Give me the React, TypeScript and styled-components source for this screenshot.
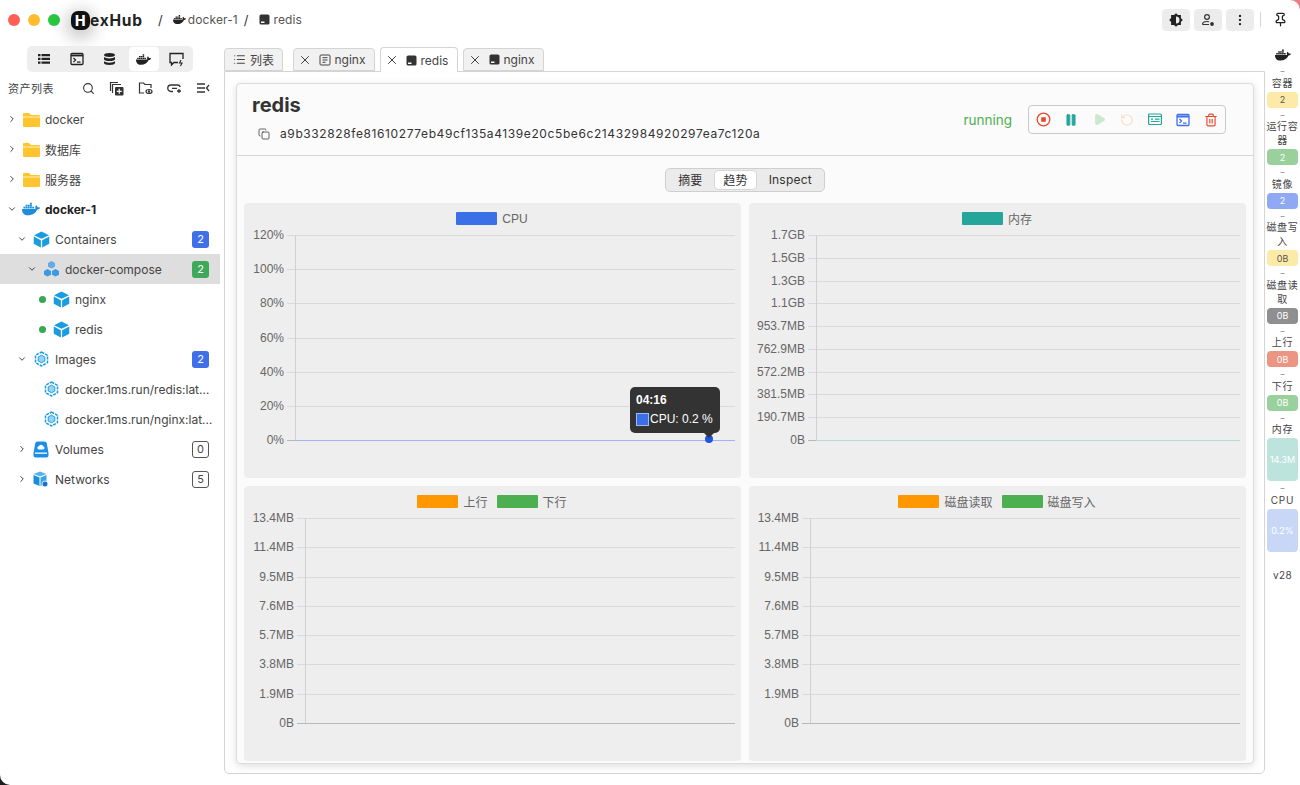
import React from "react";
import styled, { createGlobalStyle } from "styled-components";
import { FaDocker } from "react-icons/fa";
import {
  Search, ChevronRight, ChevronDown, X, Copy, Pause, Play, RotateCcw,
  Trash2, MoreVertical, Pin, List,
} from "lucide-react";

const UI = `Inter, "Noto Sans CJK SC", sans-serif`;

const Global = createGlobalStyle`
  html, body { margin: 0; padding: 0; height: 100%; overflow: hidden; }
  body {
    font-family: ${UI}; font-size: 12px; color: #333;
    background: linear-gradient(to top right, #1c1c1c 50%, #ec7f86 50%);
  }
  * { box-sizing: border-box; }
`;

const Shell = styled.div`
  width: 1300px; height: 785px; display: flex; flex-direction: column; background: #fff; overflow: hidden;
  border-radius: 0 10px 0 10px;
`;
const TopBar = styled.header`
  height: 40px; flex: none; display: flex; align-items: center; padding: 0 0 0 8px;
`;
const Lights = styled.div`display: flex; gap: 8px; margin-right: 11px;`;
const Light = styled.span<{ $c: string }>`
  width: 12px; height: 12px; border-radius: 50%; background: ${(p) => p.$c};
`;
const Logo = styled.div`
  width: 76px; display: flex; align-items: center; font: 700 15.5px ${UI}; color: #222;
  letter-spacing: 0.75px;
`;
const LogoMark = styled.span`
  width: 19px; height: 19px; border-radius: 7px; background: #111; color: #fff; margin-right: 0;
  display: flex; align-items: center; justify-content: center; font-size: 14px; font-weight: 800; flex: none;
  box-shadow: 0 4px 16px 5px rgba(0,0,0,.2);
`;
const Crumbs = styled.nav`
  display: flex; align-items: center; flex: 1; margin-left: 11px; color: #555; font-size: 12px; margin-top: -1px; letter-spacing: .1px;
`;
const Slash = styled.span<{ $gap: number }>`color: #333; font-size: 13px; margin: 0 ${(p) => p.$gap}px 0 0;`;
const CrumbLabel = styled.span<{ $gap?: number; $left?: number }>`margin: 0 ${(p) => p.$gap ?? 0}px 0 ${(p) => p.$left ?? 3}px;`;
const TopActions = styled.div`display: flex; align-items: center; gap: 4px; margin-top: -1px;`;
const TopBtn = styled.button`
  width: 28px; height: 22px; border: 0; border-radius: 4px; background: #ececec; padding: 0;
  display: flex; align-items: center; justify-content: center; color: #222;
`;
const VRule = styled.span`width: 1px; height: 15px; background: #d4d4d4; margin: 0 8px 0 2px;`;
const PinBox = styled.span`display: flex; width: 15px; margin-right: 12px; color: #222;`;

const Body = styled.div`flex: 1; min-height: 0; display: flex;`;
const Sidebar = styled.aside`width: 220px; flex: none; padding-top: 6px; display: flex; flex-direction: column;`;
const ModeBar = styled.div`
  align-self: flex-start; margin-left: 27px; width: 166px; height: 26px; border-radius: 5px; background: #eee;
  display: flex;
`;
const ModeBtn = styled.span<{ $on?: boolean }>`
  width: 33.2px; height: 24px; margin-top: 1px; padding: 0 1.5px; display: flex; align-items: center; justify-content: center;
  border-radius: 5px; color: #222; background: ${(p) => (p.$on ? "#fff" : "transparent")}; background-clip: content-box;
`;
const ToolRow = styled.div`height: 32px; flex: none; display: flex; align-items: center; padding-left: 8px; color: #444;`;
const ToolTitle = styled.span`font-size: 11px; width: 74px; letter-spacing: .5px;`;
const ToolIcons = styled.div`display: flex; gap: 14px; align-items: center; color: #333;`;

const Row = styled.div<{ $depth: number; $sel?: boolean; $tight?: boolean }>`
  height: 30px; display: flex; align-items: center;
  padding: 0 ${(p) => (p.$tight ? 5 : 11)}px 0 ${(p) => 7 + p.$depth * 10}px;
  background: ${(p) => (p.$sel ? "#dedede" : "transparent")};
`;
const Chev = styled.span`width: 10px; flex: none; display: flex; align-items: center; justify-content: center; color: #222;`;
const DotSlot = styled.span`width: 10px; flex: none; display: flex; justify-content: flex-end;`;
const Dot = styled.i`width: 7px; height: 7px; border-radius: 50%; background: #34a853; display: block; margin-right: 1px;`;
const IconSlot = styled.span`width: 18px; height: 18px; margin: 0 5px; flex: none; display: flex; align-items: center; justify-content: center;`;
const Label = styled.span<{ $bold?: boolean }>`
  flex: 1; min-width: 0; white-space: nowrap; overflow: hidden; text-overflow: ellipsis; font-size: 12px;
  color: ${(p) => (p.$bold ? "#222" : "#444")}; font-weight: ${(p) => (p.$bold ? 700 : 400)};
`;
const Count = styled.span<{ $kind: "blue" | "green" | "line" }>`
  width: 17px; height: 17px; border-radius: 3px; font-size: 11px; display: flex; align-items: center; justify-content: center; flex: none;
  background: ${(p) => (p.$kind === "blue" ? "#3f70e8" : p.$kind === "green" ? "#3fa95b" : "#fff")};
  color: ${(p) => (p.$kind === "line" ? "#444" : "#fff")};
  border: ${(p) => (p.$kind === "line" ? "1px solid #555" : "0")};
`;

const Main = styled.main`flex: 1; min-width: 0; display: flex; flex-direction: column; padding: 8px 0 11px 4px;`;
const Tabs = styled.div`display: flex; align-items: flex-end; height: 23px; flex: none; gap: 5px; position: relative; z-index: 1;`;
const Tab = styled.div<{ $on?: boolean; $w: number; $after?: number; $pad?: number }>`
  width: ${(p) => p.$w}px; margin-right: ${(p) => p.$after ?? 0}px; padding-right: ${(p) => p.$pad ?? 0}px;
  height: ${(p) => (p.$on ? 25 : 23)}px; margin-bottom: ${(p) => (p.$on ? -1 : 0)}px;
  border: 1px solid #d4d4d4; border-bottom: ${(p) => (p.$on ? "0" : "1px solid #d4d4d4")};
  border-radius: 4px 4px 0 0; background: ${(p) => (p.$on ? "#fff" : "#f1f1f1")};
  display: flex; align-items: center; justify-content: center; gap: 4px; font-size: 12px; color: #444;
`;
const TabClose = styled.span`display: flex; margin-right: 3px; color: #333;`;
const Panel = styled.section`
  flex: 1; min-height: 0; border: 1px solid #d4d4d4; border-radius: 0 0 5px 5px; padding: 11px 10px 9px 11px; background: #fff;
  display: flex;
`;
const Card = styled.article`
  flex: 1; min-width: 0; border: 1px solid #dcdcdc; border-radius: 4px; background: #fbfbfb;
  box-shadow: 0 2px 8px rgba(0,0,0,.13); display: flex; flex-direction: column; overflow: hidden;
`;
const CardHead = styled.div`
  height: 72px; flex: none; border-bottom: 1px solid #d6d6d6; display: flex; align-items: center; padding: 0 27px 0 15px;
`;
const HeadText = styled.div`flex: 1; align-self: flex-start; margin-top: 9px; display: flex; flex-direction: column;`;
const Title = styled.h1`margin: 0; font: 700 20px/24px ${UI}; color: #333;`;
const IdRow = styled.div`display: flex; align-items: center; margin: 9px 0 0 6px; color: #333; gap: 10px;`;
const IdText = styled.span`font: 400 12px ${UI}; letter-spacing: .6px;`;
const Status = styled.span`font-size: 13.5px; color: #4caf50; margin-right: 16px;`;
const ActionGroup = styled.div`
  width: 198px; height: 29px; border: 1px solid #c9c9c9; border-radius: 4px; display: flex; align-items: center;
`;
const Action = styled.span<{ $c: string; $dim?: boolean }>`
  width: 28px; display: flex; align-items: center; justify-content: center; color: ${(p) => p.$c}; opacity: ${(p) => (p.$dim ? 0.25 : 1)};
`;
const SegRow = styled.div`flex: none; display: flex; justify-content: center; padding: 12px 0 11px;`;
const Seg = styled.div`
  width: 160px; height: 24px; border: 1px solid #cfcfcf; border-radius: 5px; background: #ebebeb; display: flex; align-items: center; padding: 0 1px;
`;
const SegItem = styled.span<{ $on?: boolean; $w: number }>`
  width: ${(p) => p.$w}px; height: 20px; border-radius: 4px; display: flex; align-items: center; justify-content: center; font-size: 12px; color: #333; padding-bottom: 1px;
  background: ${(p) => (p.$on ? "#fff" : "transparent")}; letter-spacing: .2px;
  border: ${(p) => (p.$on ? "1px solid #d6d6d6" : "0")};
`;
const ChartGrid = styled.div`
  flex: 1; min-height: 0; display: grid; grid-template-columns: 497px 497px; grid-template-rows: 275px 275px; gap: 8px; padding: 0 0 0 7px;
`;
const ChartCard = styled.div`background: #eeeeee; border-radius: 4px; position: relative; overflow: hidden;`;
const Legend = styled.div`height: 30px; padding: 1px 1px 0 0; display: flex; align-items: center; justify-content: center; gap: 9px;`;
const LegendItem = styled.div`display: flex; align-items: center; gap: 5px; font: 12px "Liberation Sans", "Noto Sans CJK SC", sans-serif; color: #666;`;
const Swatch = styled.i<{ $c: string }>`width: 41px; height: 13px; display: block; background: ${(p) => p.$c}; border-radius: 1px;`;
const Plot = styled.svg`display: block; overflow: visible;`;
const Tooltip = styled.div`
  position: absolute; left: 386px; top: 184px; width: 90px; height: 46px; background: #333; border-radius: 5px; color: #fff;
  padding: 5px 6px; font: 12px "Liberation Sans", sans-serif;
  &::after { content: ""; position: absolute; left: 73px; bottom: -5px; border: 6px solid transparent; border-bottom: 0; border-top-color: #333; }
`;
const TipTime = styled.div`font-weight: 700; line-height: 16px;`;
const TipRow = styled.div`display: flex; align-items: center; margin-top: 4px; line-height: 14px; white-space: nowrap;`;
const TipSwatch = styled.i`width: 13px; height: 13px; background: #3b6fe8; border: 1px solid #9fb9f5; margin-right: 1px; display: block;`;

const Rail = styled.aside`
  width: 35px; flex: none; padding: 7px 1px 0; display: flex; flex-direction: column; align-items: center; color: #444;
`;
const RailIcon = styled.span`height: 16px; display: flex; align-items: center; margin-bottom: 3px;`;
const RailDash = styled.span`height: 9.5px; font-size: 8px; line-height: 10px; color: #777;`;
const RailLabel = styled.div`
  width: 100%; text-align: center; font-size: 10px; line-height: 14px; letter-spacing: .75px; word-break: break-all;
`;
const RailBadge = styled.div<{ $bg: string; $fg?: string; $h: number }>`
  width: 31px; height: ${(p) => p.$h}px; border-radius: 4px; margin: 2px 0; background: ${(p) => p.$bg}; color: ${(p) => p.$fg ?? "#fff"};
  font-size: 9px; display: flex; align-items: center; justify-content: center; flex: none; white-space: nowrap;
`;
const RailVersion = styled.div`font-size: 10px; margin-top: 15.5px; letter-spacing: .4px;`;

/* drawn icons */
const Folder = () => (
  <svg width="17" height="15" viewBox="0 0 17 15"><path d="M1 1h5l2 2h8a1 1 0 0 1 1 1v10a1 1 0 0 1-1 1H1a1 1 0 0 1-1-1V2a1 1 0 0 1 1-1z" fill="#ffc42e" /><path d="M0 4h17v2H0z" fill="#ffdb75" /></svg>
);
const Cube = ({ s = 17 }: { s?: number }) => (
  <svg width={s} height={s} viewBox="0 0 16 16" fill="#1a9de0"><path d="M8 .5 15 4 8 7.400 1 4z" /><path d="M.7 5.200 7.400 8.600v6.900L.7 12.100z" /><path d="M15.300 5.200 8.600 8.600v6.900l6.700-3.400z" /></svg>
);
const Compose = () => (
  <svg width="17" height="16" viewBox="0 0 17 16" fill="#3d98e6"><path d="M8.500 0 12 1.900v3.800L8.500 7.500 5 5.700V1.900z" opacity=".75" /><path d="M4.500 8 8 9.900v3.800L4.500 15.500 1 13.700V9.900z" /><path d="M12.500 8 16 9.900v3.800l-3.500 1.800L9 13.700V9.900z" /></svg>
);
const ImageIcon = () => (
  <svg width="15" height="16" viewBox="0 0 15 16" fill="none" stroke="#1a9de0"><path d="M7.500 1 13.500 4.400v7.200L7.500 15 1.500 11.600V4.400z" strokeWidth="1.500" strokeDasharray="3 1" /><path d="M7.500 4.200 10.800 6v4L7.500 11.800 4.200 10V6z" fill="#1a9de0" fillOpacity=".45" strokeWidth="1" /></svg>
);
const VolumeIcon = () => (
  <svg width="16" height="17" viewBox="0 0 16 17"><path d="M5 .5h6a3 3 0 0 1 3 3L15.500 12v2.500a2 2 0 0 1-2 2h-11a2 2 0 0 1-2-2V12L2 3.500a3 3 0 0 1 3-3z" fill="#1a8fe8" /><path d="M5.500 8.500a1.700 1.700 0 0 1 .2-3.300 2.500 2.500 0 0 1 4.700.2 1.600 1.600 0 0 1 0 3.100z" fill="#fff" /><path d="M2 11.500h12v1.300H2z" fill="#fff" /></svg>
);
const NetworkIcon = () => (
  <svg width="16" height="17" viewBox="0 0 16 17"><path d="M7 .5 13.500 3 7 5.600.5 3z" fill="#58b3ea" /><path d="M.5 4 6.500 6.500V15L.5 12.500z" fill="#1a8fd8" /><path d="M13.500 4 7.500 6.500V15l6-2.500z" fill="#3aa4e4" /><circle cx="12" cy="13" r="3" fill="#1a75c8" stroke="#fff" strokeWidth=".8" /></svg>
);
const DocIcon = () => (
  <svg width="12" height="12" viewBox="0 0 12 12" fill="none" stroke="#444"><rect x="1" y="1" width="10" height="10" rx="1" /><path d="M3.500 3.700h5M3.500 6h5M3.500 8.300h3" /></svg>
);
const SolidCont = ({ s = 11 }: { s?: number }) => (
  <svg width={s} height={s} viewBox="0 0 11 11"><rect x=".5" y=".5" width="10" height="10" rx="1.600" fill="#333" /><path d="M2 7.500h3.500V9H2z" fill="#fff" /></svg>
);
const ListSolid = () => (
  <svg width="14" height="12" viewBox="0 0 14 12" fill="#222"><path d="M1 1h2.500v2.200H1zM4.500 1H13v2.200H4.500zM1 4.800h2.500V7H1zM4.500 4.800H13V7H4.500zM1 8.600h2.500v2.200H1zM4.500 8.600H13v2.200H4.500z" /></svg>
);
const TermBox = ({ c = "#222", s = 14 }: { c?: string; s?: number }) => (
  <svg width={s} height={s} viewBox="0 0 14 14" fill="none" stroke={c} strokeWidth="1.300"><rect x="1" y="1.500" width="12" height="11" rx="1" /><path d="M1 3.500h12" strokeWidth="1.800" /><path d="M3.500 6 5.500 8 3.500 10M7 10.200h3.500" /></svg>
);
const DbIcon = () => (
  <svg width="13" height="14" viewBox="0 0 13 14" fill="#222"><path d="M6.500 1C9.800 1 12 1.800 12 3s-2.200 2-5.500 2S1 4.200 1 3s2.200-2 5.500-2z" /><path d="M1 5c1 .9 3 1.400 5.500 1.400S11 5.900 12 5v2.200c0 1.100-2.200 1.900-5.500 1.900S1 8.300 1 7.200z" /><path d="M1 9.300c1 .9 3 1.400 5.500 1.400s4.500-.5 5.500-1.400V11c0 1.200-2.200 2-5.500 2S1 12.200 1 11z" /></svg>
);
const MsgFlash = () => (
  <svg width="15" height="15" viewBox="0 0 15 15" fill="none" stroke="#222" strokeWidth="1.300"><path d="M9 10.500H5L2.500 13v-2.500H1V1.500h13V7" /><path d="M12 8 10.500 11H13l-1.500 3" strokeWidth="1.100" /></svg>
);
const CopyAdd = () => (
  <svg width="15" height="15" viewBox="0 0 15 15" fill="none" stroke="#333" strokeWidth="1.200"><path d="M1.500 10V1.500H9" /><path d="M3.500 12V3.500H12" /><rect x="6" y="6" width="8.500" height="8.500" rx="1" fill="#333" stroke="none" /><path d="M10.250 7.800v5M7.800 10.300h5" stroke="#fff" /></svg>
);
const FolderEye = () => (
  <svg width="15" height="14" viewBox="0 0 15 14" fill="none" stroke="#333" strokeWidth="1.200"><path d="M6 12H1.500V2h4l1.500 1.500h6V7" /><ellipse cx="11" cy="10.500" rx="3" ry="2" /><circle cx="11" cy="10.500" r=".6" /></svg>
);
const LinkPlus = () => (
  <svg width="15" height="12" viewBox="0 0 15 12" fill="none" stroke="#333" strokeWidth="1.300"><path d="M6 9.500H4a3 3 0 0 1 0-6.500h6.500a3 3 0 0 1 2.800 2" /><path d="M5 6.300h5M12 7v4M10 9h4" /></svg>
);
const Collapse = () => (
  <svg width="14" height="12" viewBox="0 0 14 12" fill="none" stroke="#333" strokeWidth="1.300"><path d="M1 2h8M1 6h8M1 10h8M13 3 10.500 6 13 9" /></svg>
);
const StopCircle = () => (
  <svg width="15" height="15" viewBox="0 0 15 15" fill="none" stroke="#e5482d" strokeWidth="1.300"><circle cx="7.500" cy="7.500" r="6.300" /><rect x="5.200" y="5.200" width="4.600" height="4.600" fill="#e5482d" stroke="none" rx=".5" /></svg>
);
const PanelIcon = () => (
  <svg width="14" height="13" viewBox="0 0 14 13" fill="none" stroke="#26a69a" strokeWidth="1.200"><rect x=".6" y="1" width="12.800" height="10.500" rx="1" /><path d="M.6 3.500h12.800M3 6.200h2M7 6.200h4.500M3 8.500h8.500" /></svg>
);
const Contrast = () => (
  <svg width="14" height="14" viewBox="0 0 14 14"><path d="M7 .2 9 2h2.900v2.900L13.800 7l-1.900 2.100V12H9l-2 1.800L5 12H2.100V9.100L.2 7l1.900-2.100V2H5z" fill="#222" /><path d="M7 3.500a3.500 3.500 0 0 1 0 7z" fill="#ececec" /></svg>
);
const UserDot = () => (
  <svg width="14" height="14" viewBox="0 0 14 14" fill="none" stroke="#333" strokeWidth="1.200"><circle cx="6" cy="4" r="2.400" /><path d="M1.500 11.500c0-2 1.500-3 4.500-3 .8 0 1.500.1 2 .3M1.500 11.500H8" /><circle cx="11" cy="11" r="1.900" fill="#333" stroke="none" /></svg>
);

type AxisProps = { labels: string[]; left: number; line?: string; dot?: number };
const Axis = ({ labels, left, line, dot }: AxisProps) => {
  const top = 32, bottom = 237, right = 491;
  const step = (bottom - top) / (labels.length - 1);
  return (
    <Plot width="497" height="245" viewBox="0 30 497 245">
      {labels.map((l, i) => {
        const y = Math.round(top + i * step) + 0.5;
        return (
          <g key={l}>
            <line x1={left - 8} x2={right} y1={y} y2={y} stroke={i === labels.length - 1 ? "#b8b8b8" : "#dadada"} />
            <text x={left - 11} y={y + 3.5} textAnchor="end" fontSize="12" fill="#666" fontFamily="Liberation Sans, sans-serif">{l}</text>
          </g>
        );
      })}
      <line x1={left + 0.5} x2={left + 0.5} y1={top} y2={bottom} stroke="#d0d0d0" />
      {line && <line x1={left} x2={right} y1={bottom + 0.5} y2={bottom + 0.5} stroke={line} />}
      {dot !== undefined && <circle cx={dot} cy={bottom - 1} r="4" fill="#1f55e0" />}
    </Plot>
  );
};

const RailStat = ({ label, value, bg, fg, h = 16 }: { label: string; value: string; bg: string; fg?: string; h?: number }) => (
  <>
    <RailDash>–</RailDash>
    <RailLabel>{label}</RailLabel>
    <RailBadge $bg={bg} $fg={fg} $h={h}>{value}</RailBadge>
  </>
);

const chev = (open: boolean) => (
  <Chev>{open ? <ChevronDown size={12} strokeWidth={2} /> : <ChevronRight size={12} strokeWidth={2} />}</Chev>
);
const Empty = () => <Chev />;
const Close = () => <TabClose><X size={14} strokeWidth={1.6} /></TabClose>;

export default function App() {
  return (
    <Shell>
      <Global />
      <TopBar>
        <Lights>
          <Light $c="#ff5f57" /><Light $c="#febc2e" /><Light $c="#28c840" />
        </Lights>
        <Logo><LogoMark>H</LogoMark>exHub</Logo>
        <Crumbs>
          <Slash $gap={10}>/</Slash>
          <FaDocker size={13} color="#222" />
          <CrumbLabel $gap={6} $left={2}>docker-1</CrumbLabel>
          <Slash $gap={10}>/</Slash>
          <SolidCont />
          <CrumbLabel $left={4}>redis</CrumbLabel>
        </Crumbs>
        <TopActions>
          <TopBtn><Contrast /></TopBtn>
          <TopBtn><UserDot /></TopBtn>
          <TopBtn><MoreVertical size={14} strokeWidth={2} /></TopBtn>
          <VRule />
          <PinBox><Pin size={15} strokeWidth={2} /></PinBox>
        </TopActions>
      </TopBar>
      <Body>
        <Sidebar>
          <ModeBar>
            <ModeBtn><ListSolid /></ModeBtn>
            <ModeBtn><TermBox /></ModeBtn>
            <ModeBtn><DbIcon /></ModeBtn>
            <ModeBtn $on><FaDocker size={15} /></ModeBtn>
            <ModeBtn><MsgFlash /></ModeBtn>
          </ModeBar>
          <ToolRow>
            <ToolTitle>资产列表</ToolTitle>
            <ToolIcons>
              <Search size={13} strokeWidth={2} />
              <CopyAdd />
              <FolderEye />
              <LinkPlus />
              <Collapse />
            </ToolIcons>
          </ToolRow>
          <Row $depth={0}>{chev(false)}<IconSlot><Folder /></IconSlot><Label>docker</Label></Row>
          <Row $depth={0}>{chev(false)}<IconSlot><Folder /></IconSlot><Label>数据库</Label></Row>
          <Row $depth={0}>{chev(false)}<IconSlot><Folder /></IconSlot><Label>服务器</Label></Row>
          <Row $depth={0}>{chev(true)}<IconSlot><FaDocker size={18} color="#1d8fd8" /></IconSlot><Label $bold>docker-1</Label></Row>
          <Row $depth={1}>{chev(true)}<IconSlot><Cube /></IconSlot><Label>Containers</Label><Count $kind="blue">2</Count></Row>
          <Row $depth={2} $sel>{chev(true)}<IconSlot><Compose /></IconSlot><Label>docker-compose</Label><Count $kind="green">2</Count></Row>
          <Row $depth={3}><DotSlot><Dot /></DotSlot><IconSlot><Cube /></IconSlot><Label>nginx</Label></Row>
          <Row $depth={3}><DotSlot><Dot /></DotSlot><IconSlot><Cube /></IconSlot><Label>redis</Label></Row>
          <Row $depth={1}>{chev(true)}<IconSlot><ImageIcon /></IconSlot><Label>Images</Label><Count $kind="blue">2</Count></Row>
          <Row $depth={2} $tight><Empty /><IconSlot><ImageIcon /></IconSlot><Label>docker.1ms.run/redis:latest</Label></Row>
          <Row $depth={2} $tight><Empty /><IconSlot><ImageIcon /></IconSlot><Label>docker.1ms.run/nginx:latest</Label></Row>
          <Row $depth={1}>{chev(false)}<IconSlot><VolumeIcon /></IconSlot><Label>Volumes</Label><Count $kind="line">0</Count></Row>
          <Row $depth={1}>{chev(false)}<IconSlot><NetworkIcon /></IconSlot><Label>Networks</Label><Count $kind="line">5</Count></Row>
        </Sidebar>
        <Main>
          <Tabs>
            <Tab $w={59} $after={5}><List size={13} />列表</Tab>
            <Tab $w={82} $pad={5}><Close /><DocIcon />nginx</Tab>
            <Tab $w={78} $on $pad={5}><Close /><SolidCont />redis</Tab>
            <Tab $w={81} $pad={5}><Close /><SolidCont />nginx</Tab>
          </Tabs>
          <Panel>
            <Card>
              <CardHead>
                <HeadText>
                  <Title>redis</Title>
                  <IdRow>
                    <Copy size={12} strokeWidth={1.5} />
                    <IdText>a9b332828fe81610277eb49cf135a4139e20c5be6c21432984920297ea7c120a</IdText>
                  </IdRow>
                </HeadText>
                <Status>running</Status>
                <ActionGroup>
                  <Action $c="#e5482d"><StopCircle /></Action>
                  <Action $c="#26a69a"><Pause size={14} fill="#26a69a" strokeWidth={1.5} /></Action>
                  <Action $c="#4caf50" $dim><Play size={13} fill="#4caf50" /></Action>
                  <Action $c="#f4873d" $dim><RotateCcw size={14} /></Action>
                  <Action $c="#26a69a"><PanelIcon /></Action>
                  <Action $c="#3f70e8"><TermBox c="#3f70e8" /></Action>
                  <Action $c="#e5482d"><Trash2 size={14} strokeWidth={2} /></Action>
                </ActionGroup>
              </CardHead>
              <SegRow>
                <Seg>
                  <SegItem $w={47}>摘要</SegItem>
                  <SegItem $w={44} $on>趋势</SegItem>
                  <SegItem $w={66}>Inspect</SegItem>
                </Seg>
              </SegRow>
              <ChartGrid>
                <ChartCard>
                  <Legend><LegendItem><Swatch $c="#3b6fe8" />CPU</LegendItem></Legend>
                  <Axis left={51} line="#9db5f2" dot={465} labels={["120%", "100%", "80%", "60%", "40%", "20%", "0%"]} />
                  <Tooltip>
                    <TipTime>04:16</TipTime>
                    <TipRow><TipSwatch />CPU: 0.2 %</TipRow>
                  </Tooltip>
                </ChartCard>
                <ChartCard>
                  <Legend><LegendItem><Swatch $c="#26a69a" />内存</LegendItem></Legend>
                  <Axis left={67} line="#b4dcd6" labels={["1.7GB", "1.5GB", "1.3GB", "1.1GB", "953.7MB", "762.9MB", "572.2MB", "381.5MB", "190.7MB", "0B"]} />
                </ChartCard>
                <ChartCard>
                  <Legend>
                    <LegendItem><Swatch $c="#ff9800" />上行</LegendItem>
                    <LegendItem><Swatch $c="#4caf50" />下行</LegendItem>
                  </Legend>
                  <Axis left={61} labels={["13.4MB", "11.4MB", "9.5MB", "7.6MB", "5.7MB", "3.8MB", "1.9MB", "0B"]} />
                </ChartCard>
                <ChartCard>
                  <Legend>
                    <LegendItem><Swatch $c="#ff9800" />磁盘读取</LegendItem>
                    <LegendItem><Swatch $c="#4caf50" />磁盘写入</LegendItem>
                  </Legend>
                  <Axis left={61} labels={["13.4MB", "11.4MB", "9.5MB", "7.6MB", "5.7MB", "3.8MB", "1.9MB", "0B"]} />
                </ChartCard>
              </ChartGrid>
            </Card>
          </Panel>
        </Main>
        <Rail>
          <RailIcon><FaDocker size={16} color="#222" /></RailIcon>
          <RailStat label="容器" value="2" bg="#fdeaa8" fg="#555" />
          <RailStat label="运行容器" value="2" bg="#9ad09c" />
          <RailStat label="镜像" value="2" bg="#8faaf2" />
          <RailStat label="磁盘写入" value="0B" bg="#fdeaa8" fg="#555" />
          <RailStat label="磁盘读取" value="0B" bg="#8f8f8f" />
          <RailStat label="上行" value="0B" bg="#eb9582" />
          <RailStat label="下行" value="0B" bg="#9ad09c" />
          <RailStat label="内存" value="14.3M" bg="#bde3dd" h={43} />
          <RailStat label="CPU" value="0.2%" bg="#c9d7f6" h={43} />
          <RailVersion>v28</RailVersion>
        </Rail>
      </Body>
    </Shell>
  );
}
